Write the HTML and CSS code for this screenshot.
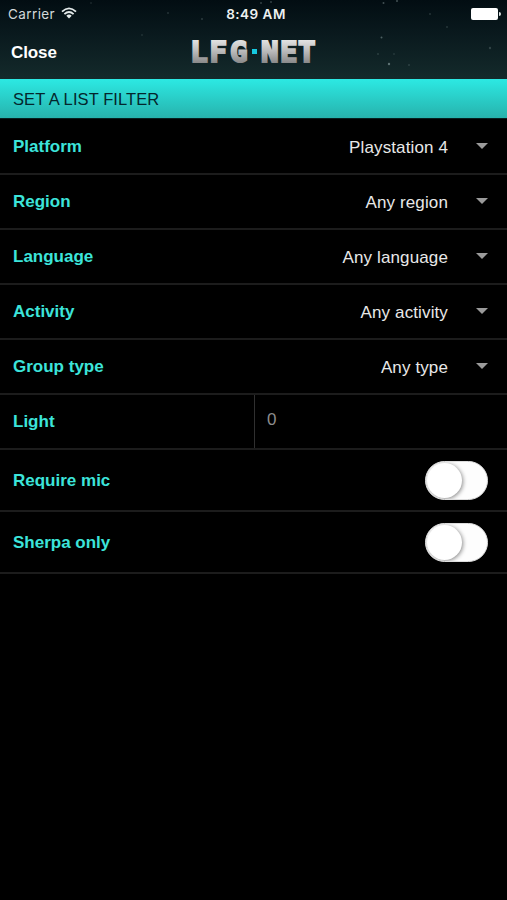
FILE: index.html
```html
<!DOCTYPE html>
<html lang="en">
<head>
<meta charset="utf-8">
<title>LFG.NET – Set a list filter</title>
<link rel="stylesheet" href="styles.css">
</head>
<body>
<header class="top">
  <svg class="stars" width="507" height="79" aria-hidden="true">
    <g fill="#9fb5b5">
      <circle cx="383.500" cy="3" r="1" opacity=".4"/><circle cx="397" cy="1" r="1" opacity=".4"/>
      <circle cx="430" cy="14" r="1" opacity=".2"/><circle cx="381.500" cy="37.500" r="1" opacity=".45"/>
      <circle cx="389" cy="64" r="1.200" opacity=".55"/><circle cx="378" cy="54" r="1" opacity=".2"/>
      <circle cx="394" cy="54" r="1" opacity=".15"/><circle cx="490" cy="48" r="1.200" opacity=".25"/>
      <circle cx="447" cy="27" r="1" opacity=".2"/><circle cx="409" cy="65" r="1" opacity=".2"/>
      <circle cx="202" cy="19" r="1" opacity=".25"/><circle cx="261" cy="3" r="1" opacity=".3"/>
      <circle cx="271" cy="2" r="1" opacity=".3"/><circle cx="168" cy="13" r="1" opacity=".2"/>
      <circle cx="91" cy="3" r="1" opacity=".15"/><circle cx="142" cy="35" r="1" opacity=".15"/>
    </g>
  </svg>
  <div class="status">
    <div class="carrier"><span>Carrier</span>
      <svg width="16" height="12" viewBox="0 0 16 12" fill="none" stroke="#e4eaea" stroke-width="1.800"><path d="M1 4.600Q8-1.900 15 4.600M3.400 7.100Q8 2.900 12.600 7.100"/><path d="M5.300 8.700Q8 6.400 10.700 8.700L8 11.500Z" fill="#e4eaea" stroke="none"/></svg>
    </div>
    <div class="clock">8:49 AM</div>
    <div class="battery"><i class="cell"></i><i class="tip"></i></div>
  </div>
  <nav class="bar">
    <span class="close">Close</span>
    <svg class="logo" width="136" height="49" viewBox="0 0 136 49">
      <defs><linearGradient id="metal" gradientUnits="userSpaceOnUse" x1="0" y1="13" x2="0" y2="37"><stop offset="0" stop-color="#e2e2e2"/><stop offset=".45" stop-color="#bcbcbc"/><stop offset="1" stop-color="#858585"/></linearGradient></defs>
      <g class="word" fill="url(#metal)" stroke="url(#metal)">
        <text x="2.300 21.500 42" y="35">LFG</text>
        <text x="73 92 110" y="35">NET</text>
      </g>
      <rect x="64" y="22" width="5" height="5" fill="#16c9e0"/>
    </svg>
  </nav>
</header>
<h1 class="heading"><span>SET A LIST FILTER</span></h1>
<main>
  <div class="row"><b>Platform</b><span class="value">Playstation 4</span><i class="caret"></i></div>
  <div class="row"><b>Region</b><span class="value">Any region</span><i class="caret"></i></div>
  <div class="row"><b>Language</b><span class="value">Any language</span><i class="caret"></i></div>
  <div class="row"><b>Activity</b><span class="value">Any activity</span><i class="caret"></i></div>
  <div class="row"><b>Group type</b><span class="value">Any type</span><i class="caret"></i></div>
  <div class="row split"><b>Light</b><span class="field">0</span></div>
  <div class="row tall"><b>Require mic</b><span class="switch"><i></i></span></div>
  <div class="row tall"><b>Sherpa only</b><span class="switch"><i></i></span></div>
</main>
</body>
</html>
```

FILE: styles.css
```css
* { box-sizing: border-box; }
body {
  margin: 0;
  width: 507px;
  height: 900px;
  overflow: hidden;
  background: #000;
  color: #e8e8e8;
  font-family: "Liberation Sans", Arial, sans-serif;
  font-size: 17px;
}
.top {
  position: relative;
  height: 79px;
  background: linear-gradient(#020d12, #0a1a1e 45%, #142a2b);
}
.stars { position: absolute; left: 0; top: 0; }
.status {
  position: relative;
  display: grid;
  grid-template-columns: 1fr auto 1fr;
  align-items: center;
  height: 27px;
  padding: 0 6px 0 8px;
  font: 13.5px Inter, sans-serif;
}
.carrier { display: flex; align-items: center; gap: 6px; color: #d2d9da; letter-spacing: .4px; }
.carrier svg { margin-top: -1px; }
.clock { padding-left: 3px; font-weight: 600; font-size: 13.5px; letter-spacing: .5px; color: #edf1f1; }
.battery { display: flex; align-items: center; justify-content: flex-end; gap: 1px; }
.cell { width: 27px; height: 12px; border-radius: 2px; background: #fff; }
.tip { width: 2px; height: 4px; border-radius: 0 2px 2px 0; background: #dfe5e5; }
.bar {
  position: relative;
  display: grid;
  grid-template-columns: 188px auto;
  align-items: center;
  height: 49px;
}
.close { padding-left: 11px; font-weight: bold; color: #fff; letter-spacing: -.1px; padding-top: 2px; }
.logo { display: block; }
.word { font: bold 29px "DejaVu Sans Mono", monospace; stroke-width: 2.2; stroke-linejoin: miter; }
.heading {
  display: flex;
  align-items: center;
  height: 40px;
  margin: 0;
  padding: 1px 13px 0;
  border-bottom: 1px solid #06201f;
  background: linear-gradient(#2ce9e3, #27b2ac);
  color: #04262c;
  font-size: 16.5px;
  font-weight: normal;
  letter-spacing: .08px;
}
.row {
  display: flex;
  align-items: center;
  height: 55px;
  padding: 0 19px 0 13px;
  border-bottom: 2px solid #1c1c1c;
}
main { padding-top: 1px; margin-top: -1px; }
.row:first-child { height: 56px; padding-top: 1px; }
.row b { flex: 1; color: #3ce4da; letter-spacing: 0; }
.value { padding: 2px 2px 0 0; letter-spacing: .12px; }
.caret {
  margin: -2px 0 0 26px;
  border: 6px solid transparent;
  border-top-color: #9a9a9a;
  border-bottom: 0;
}
.split { padding: 0 0 0 13px; }
.split b { flex: 0 0 241px; }
.field {
  display: flex;
  align-items: center;
  align-self: stretch;
  flex: 1;
  padding: 0 0 4px 12px;
  border-left: 1px solid #303030;
  color: #8d8d8d;
}
.tall { height: 62px; padding-top: 1px; }
.tall b { padding-top: 1px; }
.switch {
  width: 63px;
  height: 39px;
  padding: 1px;
  border-radius: 20px;
  overflow: hidden;
  border: 1px solid #ddd;
  background: #fdfdfd;
}
.switch i {
  display: block;
  width: 35px;
  height: 35px;
  border-radius: 50%;
  background: #fff;
  box-shadow: 1px 1px 4px rgba(0, 0, 0, .45);
}
```
